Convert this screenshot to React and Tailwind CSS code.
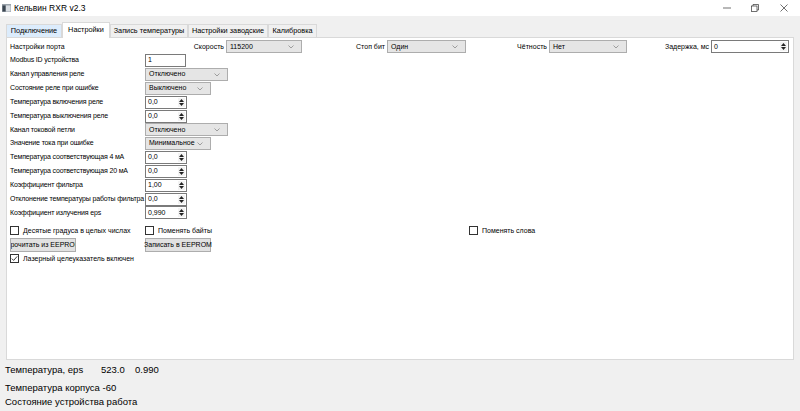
import React from "react";

function Chevron() {
  return (
    <svg width="6" height="4" viewBox="0 0 6 4" className="absolute right-[7px] top-[4px]">
      <polyline points="0.5,0.5 3,3 5.5,0.5" fill="none" stroke="#8a8a8a" strokeWidth="0.8" />
    </svg>
  );
}

function Combo({ w, text }) {
  return (
    <div className={`relative flex items-center h-[13px] border border-[#adadad] bg-[#e5e5e5] pl-[3px] text-[7px] text-black ${w}`}>
      <span>{text}</span>
      <Chevron />
    </div>
  );
}

function Arrows() {
  return (
    <div className="absolute right-[1px] top-[1px] bottom-[1px] w-[7px] flex flex-col items-center justify-center gap-[1px] bg-[#f3f3f3]">
      <svg width="5" height="3" viewBox="0 0 5 3"><polygon points="2.5,0 5,3 0,3" fill="#222" /></svg>
      <svg width="5" height="3" viewBox="0 0 5 3"><polygon points="0,0 5,0 2.5,3" fill="#222" /></svg>
    </div>
  );
}

function Spin({ w, text }) {
  return (
    <div className={`relative flex items-center h-[13px] border border-[#7a7a7a] bg-white pl-[2px] text-[7px] text-black ${w}`}>
      <span>{text}</span>
      <Arrows />
    </div>
  );
}

function Check({ checked, label }) {
  return (
    <div className="flex items-center gap-[4px]">
      <div className="w-[9px] h-[9px] border border-[#333] bg-white flex items-center justify-center">
        {checked && (
          <svg width="7" height="7" viewBox="0 0 7 7">
            <polyline points="0.8,3.6 2.6,5.4 6.2,1.4" fill="none" stroke="#222" strokeWidth="0.9" />
          </svg>
        )}
      </div>
      <span className="text-[7px] text-black">{label}</span>
    </div>
  );
}

function Row({ label, children }) {
  return (
    <div className="flex items-center h-[13.83px]">
      <div className="w-[135px] text-[7px] tracking-[-0.15px] text-black whitespace-nowrap">{label}</div>
      {children}
    </div>
  );
}

function Tab({ label, w, selected, hover }) {
  if (selected) {
    return (
      <div className={`h-[16px] -mb-px bg-white border border-b-0 border-[#d9d9d9] flex items-center justify-center text-[7.3px] text-black z-10 ${w}`}>
        {label}
      </div>
    );
  }
  return (
    <div className={`h-[13px] border border-b-0 border-[#d9d9d9] flex items-center justify-center text-[7.3px] text-black ${hover ? "bg-[#dcecfc] border-[#b9d7f3]" : "bg-[#f0f0f0]"} ${w}`}>
      {label}
    </div>
  );
}

export default function App() {
  return (
    <div className="w-[800px] h-[411px] overflow-hidden bg-[#f0f0f0] flex flex-col font-['Liberation_Sans',Arial,sans-serif]">
      {/* title bar */}
      <div className="h-[16px] bg-white flex items-center shrink-0">
        <svg width="9" height="8" viewBox="0 0 9 8" className="ml-[2px] mr-[3px]">
          <rect x="0" y="0" width="9" height="8" fill="#9aa3ab" />
          <rect x="0.5" y="1.5" width="3" height="6" fill="#3a4550" />
          <rect x="4" y="1.5" width="4.5" height="6" fill="#d9dee3" />
        </svg>
        <span className="text-[8.5px] text-black">Кельвин RXR v2.3</span>
        <div className="ml-auto flex items-center h-full">
          <div className="w-[28px] flex justify-center">
            <svg width="8" height="8" viewBox="0 0 8 8"><line x1="0" y1="4" x2="8" y2="4" stroke="#333" strokeWidth="0.7" /></svg>
          </div>
          <div className="w-[28px] flex justify-center">
            <svg width="8" height="8" viewBox="0 0 8 8">
              <rect x="0.5" y="2" width="5.5" height="5.5" fill="none" stroke="#333" strokeWidth="0.7" />
              <polyline points="2,2 2,0.5 7.5,0.5 7.5,6 6,6" fill="none" stroke="#333" strokeWidth="0.7" />
            </svg>
          </div>
          <div className="w-[30px] flex justify-center mr-[1px]">
            <svg width="8" height="8" viewBox="0 0 8 8">
              <line x1="0.5" y1="0.5" x2="7.5" y2="7.5" stroke="#333" strokeWidth="0.7" />
              <line x1="7.5" y1="0.5" x2="0.5" y2="7.5" stroke="#333" strokeWidth="0.7" />
            </svg>
          </div>
        </div>
      </div>

      {/* tabs */}
      <div className="px-[6px] mt-[6px] flex items-end h-[15px] shrink-0">
        <Tab label="Подключение" w="w-[56px]" hover />
        <Tab label="Настройки" w="w-[48px]" selected />
        <Tab label="Запись температуры" w="w-[78px]" />
        <Tab label="Настройки заводские" w="w-[80px]" />
        <Tab label="Калибровка" w="w-[49px]" />
      </div>

      {/* pane */}
      <div className="mx-[6px] h-[323px] bg-white border border-[#d9d9d9] pl-[3px] pt-[2px] shrink-0 w-[788px]">
        {/* first row */}
        <div className="flex items-center h-[13.83px]">
          <div className="w-[292px] flex items-center">
            <span className="text-[7px] text-black">Настройки порта</span>
            <div className="ml-auto flex items-center gap-[2px]">
              <span className="text-[7px] text-black">Скорость</span>
              <Combo w="w-[76px]" text="115200" />
            </div>
          </div>
          <div className="w-[164px] flex items-center justify-end gap-[2px]">
            <span className="text-[7px] text-black">Стоп бит</span>
            <Combo w="w-[79px]" text="Один" />
          </div>
          <div className="w-[161px] flex items-center justify-end gap-[2px]">
            <span className="text-[7px] text-black">Чётность</span>
            <Combo w="w-[78px]" text="Нет" />
          </div>
          <div className="w-[162px] flex items-center justify-end gap-[2px]">
            <span className="text-[7px] text-black">Задержка, мс</span>
            <Spin w="w-[78px]" text="0" />
          </div>
        </div>

        <Row label="Modbus ID устройства">
          <div className="h-[13px] w-[41px] border border-[#7a7a7a] bg-white flex items-center pl-[2px] text-[7px] text-black">1</div>
        </Row>
        <Row label="Канал управления реле"><Combo w="w-[83px]" text="Отключено" /></Row>
        <Row label="Состояние реле при ошибке"><Combo w="w-[66px]" text="Выключено" /></Row>
        <Row label="Температура включения реле"><Spin w="w-[42px]" text="0,0" /></Row>
        <Row label="Температура выключения реле"><Spin w="w-[42px]" text="0,0" /></Row>
        <Row label="Канал токовой петли"><Combo w="w-[83px]" text="Отключено" /></Row>
        <Row label="Значение тока при ошибке"><Combo w="w-[66px]" text="Минимальное" /></Row>
        <Row label="Температура соответствующая 4 мА"><Spin w="w-[42px]" text="0,0" /></Row>
        <Row label="Температура соответствующая 20 мА"><Spin w="w-[42px]" text="0,0" /></Row>
        <Row label="Коэффициент фильтра"><Spin w="w-[42px]" text="1,00" /></Row>
        <Row label="Отклонение температуры работы фильтра"><Spin w="w-[42px]" text="0,0" /></Row>
        <Row label="Коэффициент излучения eps"><Spin w="w-[42px]" text="0,990" /></Row>

        <div className="flex items-center h-[14px] mt-[4px]">
          <div className="w-[135px]"><Check label="Десятые градуса в целых числах" /></div>
          <div className="w-[324px]"><Check label="Поменять байты" /></div>
          <div><Check label="Поменять слова" /></div>
        </div>
        <div className="flex items-center h-[14px]">
          <div className="w-[135px]">
            <div className="w-[66px] h-[14px] overflow-hidden border border-[#adadad] bg-[#e1e1e1] flex items-center justify-center text-[7px] text-black whitespace-nowrap">
              <span className="shrink-0">Прочитать из EEPROM</span>
            </div>
          </div>
          <div className="w-[66px] h-[14px] border border-[#adadad] bg-[#e1e1e1] flex items-center justify-center text-[7px] text-black whitespace-nowrap">
            Записать в EEPROM
          </div>
        </div>
        <div className="flex items-center h-[14px]">
          <Check checked label="Лазерный целеуказатель включен" />
        </div>
      </div>

      {/* status */}
      <div className="pl-[5px] pt-[4px] text-[9.5px] text-black leading-none">
        <div className="flex h-[12px] items-center">
          <span className="w-[96px]">Температура, eps</span>
          <span className="w-[34px]">523.0</span>
          <span>0.990</span>
        </div>
        <div className="h-[16px] flex items-end">Температура корпуса -60</div>
        <div className="h-[14px] flex items-end">Состояние устройства работа</div>
      </div>
    </div>
  );
}
